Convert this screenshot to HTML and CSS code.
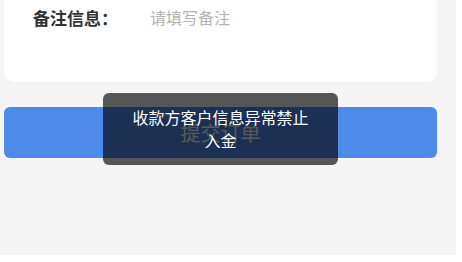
FILE: index.html
```html
<!DOCTYPE html>
<html lang="zh-CN">
<head>
<meta charset="UTF-8" />
<meta name="viewport" content="width=device-width, initial-scale=1" />
<title>提交订单</title>
<link rel="stylesheet" href="styles.css">
</head>
<body>
<div class="page">
  <div class="card">
    <div class="row">
      <span class="label">备注信息：</span>
      <input class="remark" type="text" placeholder="请填写备注" />
    </div>
  </div>

  <button class="submit" type="button">提交订单</button>

  <div class="toast">收款方客户信息异常禁止入金</div>
</div>
</body>
</html>
```

FILE: styles.css
```css
html { background: #fff; }
body { margin: 0; font-family: "Noto Sans CJK SC", "Noto Sans", sans-serif; }
.page {
  position: relative; width: 456px; height: 255px; background: #f5f5f5; overflow: hidden;
}
.card {
  margin: 0 19px 0 4px; height: 82px; background: #fff;
  border-radius: 0 0 10px 10px; padding: 6px 29px 0; box-sizing: border-box;
}
.row { display: flex; align-items: center; height: 22px; }
.label { width: 117px; font-size: 17px; font-weight: bold; color: #333; flex: none; }
.remark {
  flex: 1; border: none; outline: none; padding: 0; font-size: 16px;
  font-family: inherit; color: #333; background: transparent;
}
.remark::placeholder { color: #b3b3b3; }
.submit {
  display: block; margin: 25px 19px 0 4px; width: 433px; height: 51px;
  background: #4d8aea; color: #fff; border: none; border-radius: 6px;
  font-size: 20px; font-family: inherit; cursor: pointer;
}
.toast {
  position: absolute; left: 103px; top: 93px; width: 235px; height: 72px;
  box-sizing: border-box; padding: 13px 28px;
  background: rgba(0, 0, 0, 0.65); color: #fff; border-radius: 6px;
  font-size: 16px; line-height: 23px; text-align: center;
}
```
